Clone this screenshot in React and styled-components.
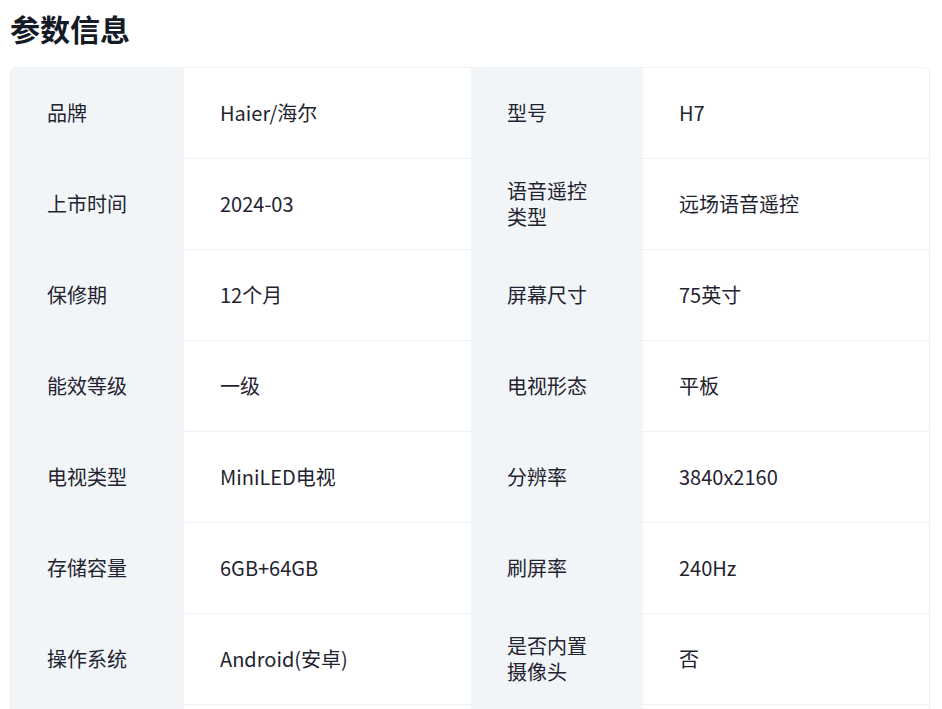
import styled, { createGlobalStyle } from "styled-components";

const Global = createGlobalStyle`
  body { margin: 0; background: #fff; font-family: "Noto Sans CJK SC", "Noto Sans", sans-serif; color: #1f2430; }
`;

const Page = styled.div`
  padding: 6px 12px 0 10px;
`;

const Title = styled.h2`
  margin: 0 0 16px;
  font-size: 30px;
  font-weight: 700;
  line-height: 45px;
  color: #141a26;
`;

const Table = styled.div`
  display: grid;
  grid-template-columns: 173px 287px 172px 1fr;
  border: 1px solid #eef0f3;
  border-radius: 6px;
  overflow: hidden;
`;

const Cell = styled.div`
  height: 91px;
  box-sizing: border-box;
  display: flex;
  align-items: center;
  padding: 0 36px;
  font-size: 20px;
  line-height: 26px;
  background: ${(p) => (p.$label ? "#f2f5f8" : "#fff")};
  border-bottom: 1px solid #eef0f3;
`;

const CellText = styled.span`
  max-width: ${(p) => (p.$label ? "90px" : "none")};
`;

const rows = [
  ["品牌", "Haier/海尔", "型号", "H7"],
  ["上市时间", "2024-03", "语音遥控类型", "远场语音遥控"],
  ["保修期", "12个月", "屏幕尺寸", "75英寸"],
  ["能效等级", "一级", "电视形态", "平板"],
  ["电视类型", "MiniLED电视", "分辨率", "3840x2160"],
  ["存储容量", "6GB+64GB", "刷屏率", "240Hz"],
  ["操作系统", "Android(安卓)", "是否内置摄像头", "否"],
  ["", "", "", ""],
];

export default function App() {
  return (
    <>
      <Global />
      <Page>
        <Title>参数信息</Title>
        <Table>
          {rows.map((r, i) =>
            r.map((t, j) => (
              <Cell key={`${i}-${j}`} $label={j % 2 === 0}>
                <CellText $label={j % 2 === 0}>{t}</CellText>
              </Cell>
            ))
          )}
        </Table>
      </Page>
    </>
  );
}
